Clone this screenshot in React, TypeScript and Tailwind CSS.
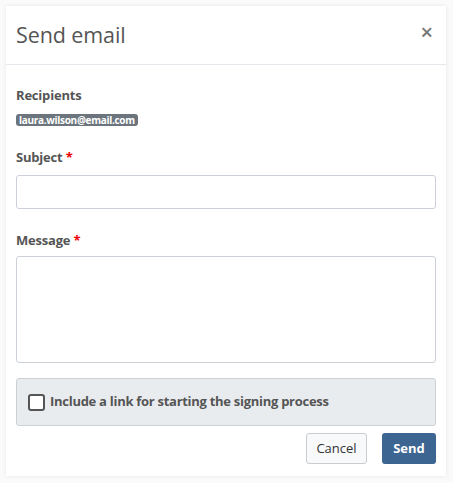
import React from "react";

export default function App() {
  return (
    <div className="w-[453px] h-[483px] bg-[#fafafa] pt-[6px] pl-[6px]" style={{ fontFamily: '"Open Sans", "Noto Sans", sans-serif' }}>
      <div className="w-[440px] h-[470px] bg-white shadow-[0_0_4px_rgba(0,0,0,0.08)] flex flex-col">
        <div className="h-[59px] flex items-center justify-between pl-[10px] pr-[13px] border-b border-[#e4e8ec]">
          <h1 className="text-[21.5px] text-[#555] leading-none tracking-[-0.1px]">Send email</h1>
          <span className="text-[22px] text-[#777] leading-none font-semibold -mt-[8px]">×</span>
        </div>
        <div className="px-[10px] pt-[21px] flex flex-col">
          <div className="text-[13px] font-bold text-[#555] leading-[18px] tracking-[-0.2px]">Recipients</div>
          <div className="mt-[10px] flex">
            <span className="bg-[#6c757d] text-white text-[10px] font-bold leading-[12px] px-[3px] rounded-[3px] tracking-[-0.3px]">laura.wilson@email.com</span>
          </div>
          <div className="mt-[22px] text-[13px] font-bold text-[#555] leading-[18px] tracking-[-0.2px]">
            Subject <span className="text-[#e00]">*</span>
          </div>
          <div className="mt-[9px] h-[34px] border border-[#ccd1d9] rounded-[3px]" />
          <div className="mt-[22px] text-[13px] font-bold text-[#555] leading-[18px] tracking-[-0.2px]">
            Message <span className="text-[#e00]">*</span>
          </div>
          <div className="mt-[7px] h-[107px] border border-[#ccd1d9] rounded-[3px]" />
          <div className="mt-[15px] h-[48px] bg-[#e9ecef] border border-[#cdd1d5] rounded-[3px] flex items-center pl-[11px]">
            <span className="w-[17px] h-[17px] border-2 border-[#555] rounded-[3px] bg-white" />
            <span className="ml-[5px] text-[13px] font-bold text-[#555] tracking-[-0.28px]">Include a link for starting the signing process</span>
          </div>
          <div className="mt-[7px] flex justify-end gap-[15px]">
            <button className="h-[31px] w-[61px] border border-[#ccc] rounded-[3px] bg-[#f8f9fa] text-[13px] text-[#333]">Cancel</button>
            <button className="h-[31px] w-[54px] rounded-[3px] bg-[#3d6592] text-[13px] font-bold text-white">Send</button>
          </div>
        </div>
      </div>
    </div>
  );
}
